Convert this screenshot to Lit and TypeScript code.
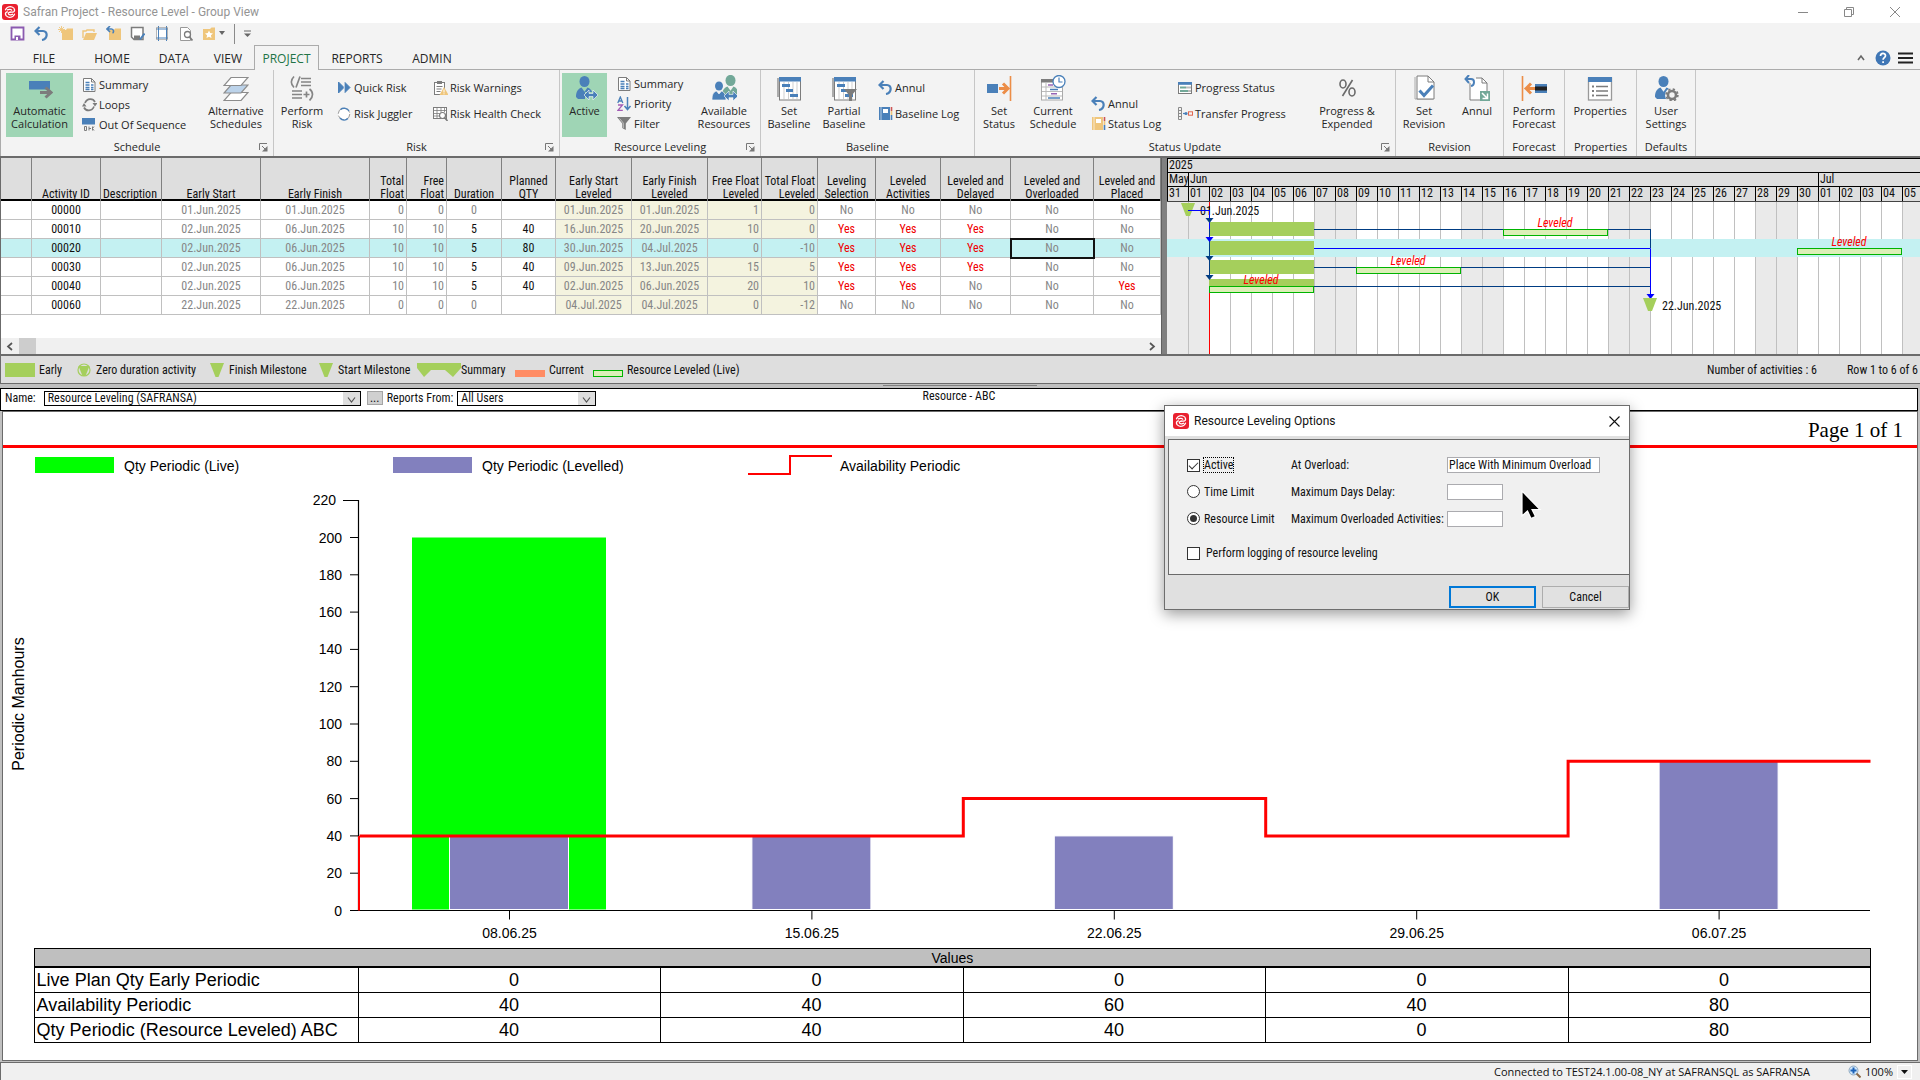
import { LitElement, html, svg, css, nothing, type TemplateResult, type SVGTemplateResult } from "lit";
import { customElement } from "lit/decorators.js";
import { classMap } from "lit/directives/class-map.js";

const BLUE = "#4a80b9";
const GRAY = "#7c7c7c";
const ORANGE = "#ec8d47";
const TEAL = "#72a898";
const SAND = "#efc67c";
const LIME = "#a5cf5c";

/* ---------- icon set ---------- */

const person = (x: number, y: number, fill: string) => svg`
  <g transform="translate(${x} ${y})" fill=${fill}>
    <ellipse cx="8.5" cy="5.5" rx="5" ry="5.6"/>
    <path d="M0 21c0-5 2-8 5.500-9.400l3 4.200 3-4.200C15 13 17 16 17 21l-2 2H2z"/>
  </g>`;
const bothArrow = (x: number, y: number) => svg`
  <path transform="translate(${x} ${y})" d="M0 5l5-5v3.400h4V0l5 5-5 5V6.600H5V10z" fill=${BLUE} stroke="#fff" stroke-width=".6"/>`;
const gantt = svg`
  <path d="M2 3v19" stroke=${GRAY} stroke-width="1.2"/>
  <rect x="3.5" y="3" width="21" height="22" fill="#fff" stroke=${GRAY}/>
  <rect x="3" y="2" width="22" height="4.5" fill=${BLUE}/>
  <path d="M8 7v17M12.500 7v17M17 7v17M21 7v17" stroke="#bbb" stroke-width=".7"/>
  <path d="M6 10.500h8M10 15.500h7M14 20.500h8" stroke=${BLUE} stroke-width="3"/>`;
const undo = svg`<path d="M5.500 1L1.500 5l4 4M2 5h7c5 0 5 8-1 9" fill="none" stroke=${BLUE} stroke-width="2.2"/>`;
const book = (c: string) => svg`
  <rect x="1" y="1" width="11" height="13" fill=${c}/><path d="M3 1v13" stroke="#fff" stroke-width=".6"/>
  <rect x="5" y="3" width="5" height="4" fill="#fff"/>
  <path d="M13.500 1v4" stroke="#c55" stroke-width="1.6"/><path d="M13.500 5v4" stroke=${SAND} stroke-width="1.6"/><path d="M13.500 9v5" stroke=${BLUE} stroke-width="1.6"/>`;

const ICONS: Record<string, SVGTemplateResult> = {
  auto: svg`<rect x="2" y="6" width="21" height="8.5" fill=${BLUE}/>
    <path d="M13 17.500h10M18.500 12.500l5.500 5-5.500 5" fill="none" stroke=${GRAY} stroke-width="3"/>`,
  layers: svg`<g stroke="#8c8c8c" stroke-width="1.2">
    <path d="M8 17.500h17l-7 8H1z" fill="#fff"/><path d="M8 10h17l-7 8H1z" fill="#bcd3ea"/><path d="M8 2.500h17l-7 8H1z" fill="#fff"/></g>`,
  formula: svg`<g fill="none" stroke="#858585" stroke-width="1.7">
    <path d="M5 1.500C1.500 5 1.500 9 5 12.500M11 1.500L7 12.500M12 3.500h10M12 7h10M12 10.500h10M3 16h10M3 19.500h10M3 23h10M14.500 19.500h6M17.500 16.500v6M20.500 14c4 3 4 8 0 11.500"/></g>`,
  level: svg`${person(4, 1, BLUE)}<path d="M13 17h12v8H13z" fill="#9fd5b5"/>${bothArrow(12, 15)}`,
  people: svg`${person(11, 0, TEAL)}<ellipse cx="8" cy="11" rx="4" ry="4.6" fill=${BLUE}/><path d="M1 25c0-5 1-8 4.500-9l2.500 3 2.500-3c3 1 4.500 4 4.500 9z" fill=${BLUE} stroke="#f3f3f3" stroke-width=".7"/>${bothArrow(13, 16)}`,
  gantt,
  ganttFilter: svg`${gantt}<path d="M13 14h13l-5 6v6h-3v-6z" fill=${GRAY}/>`,
  setStatus: svg`<rect x="1" y="9" width="11" height="9" fill=${BLUE}/><path d="M13 13.500h8M17 8.500l5 5-5 5" fill="none" stroke=${ORANGE} stroke-width="3"/><path d="M24.500 1v25" stroke=${ORANGE} stroke-width="1.6"/>`,
  schedule: svg`<rect x="1.5" y="5" width="21" height="20" fill="#fff" stroke="#aaa"/><rect x="1" y="4" width="12" height="3.5" fill=${GRAY}/>
    <path d="M2 12h20M2 16.500h20M2 21h20M6 8v17" stroke="#bbb"/><path d="M8 10h5M11 18.800h6" stroke="#9663b4" stroke-width="1.6"/><path d="M10 14.500h8M8 23h12" stroke=${BLUE} stroke-width="1.6"/>
    <circle cx="19" cy="6.5" r="6" fill="#fff" stroke=${BLUE} stroke-width="1.3"/><path d="M19 2.500v4.500h3.500" fill="none" stroke=${BLUE} stroke-width="1.2"/>`,
  percent: svg`<g fill="none" stroke="#6a6a6a" stroke-width="1.6"><ellipse cx="9" cy="9" rx="3" ry="4"/><ellipse cx="18" cy="17" rx="3" ry="4"/><path d="M18.500 5L8.500 21"/></g>`,
  docCheck: svg`<path d="M4 2v22h18" fill="none" stroke="#aaa"/><path d="M6 1h11l6 6v17H6z" fill="#fff" stroke=${GRAY}/><path d="M17 1v6h6" fill="none" stroke=${GRAY}/><path d="M8.500 15.500l4.500 5 9-10" fill="none" stroke=${BLUE} stroke-width="3"/>`,
  docUndo: svg`<path d="M6 8v17h17V8l-5-5h-6" fill="#fff" stroke=${GRAY}/><path d="M18 3v5h5" fill="none" stroke=${GRAY}/><path d="M5 0L1.500 4 5 8M2 4h5c4 0 4 6 0 7" fill="none" stroke=${BLUE} stroke-width="2"/><rect x="16" y="16" width="10" height="10" fill=${TEAL}/><path d="M18 18l5 5M23.500 18.500v5h-5" fill="none" stroke="#fff" stroke-width="1.5"/>`,
  forecast: svg`<path d="M1.500 1v25" stroke=${ORANGE} stroke-width="1.6"/><path d="M5 13.500h9M10 8.500l-5 5 5 5" fill="none" stroke=${ORANGE} stroke-width="3"/><rect x="14" y="9" width="12" height="9" fill=${BLUE}/><path d="M14 13.500h12" stroke="#222" stroke-width="4"/>`,
  props: svg`<rect x="1.5" y="3" width="23" height="22" fill="#fff" stroke="#999" stroke-width="1.3"/><rect x="1" y="2" width="24" height="5" fill=${BLUE}/><path d="M9 11.500h12M9 16h12M9 20.500h12" stroke=${GRAY} stroke-width="1.3"/><path d="M5 11.500h2M5 16h2M5 20.500h2" stroke=${GRAY} stroke-width="2"/>`,
  userGear: svg`${person(2, 1, BLUE)}<circle cx="19" cy="20" r="7" fill="#f3f3f3"/><circle cx="19" cy="20" r="4" fill="none" stroke=${GRAY} stroke-width="2.6"/><circle cx="19" cy="20" r="5.8" fill="none" stroke=${GRAY} stroke-width="1.8" stroke-dasharray="2.28 2.28"/>`,
  doc: svg`<path d="M1.500 1.500h8l3.500 3.500v9.500h-11.500z" fill="#fff" stroke=${GRAY}/><path d="M9.500 1.500v3.500h3.500" fill="none" stroke=${GRAY}/>
    <path d="M3.500 5.500h4M3.500 8h4M3.500 10.500h4M3.500 12.500h4M9 8h2.500M9 10.500h2.500M9 12.500h2.500" stroke=${BLUE} stroke-width="1.3"/>`,
  loops: svg`<g fill="none" stroke=${GRAY} stroke-width="1.7"><path d="M3 6c2-5 8-5 10-1M12 9.500c-2 5-8 5-10 1"/></g><path d="M10.500 6h5l-2.500 3.500zM0 9.500h4.500L2 6z" fill=${GRAY}/>`,
  sequence: svg`<rect x="0" y="1" width="13" height="6.5" fill=${BLUE}/><path d="M2.500 9.500v4h2v-4zM7 9.500v4M7 11.500h2M10.500 9.500v4M12 9.500l-1.500 2 1.500 2" fill="none" stroke=${GRAY}/>`,
  quick: svg`<path d="M1.500 2l5.500 5.500L1.500 13zM7.500 2L13 7.500 7.500 13z" fill=${BLUE} stroke=${BLUE}/><path d="M7.300 2v11" stroke="#f3f3f3" stroke-width=".8"/>`,
  juggler: svg`<circle cx="7" cy="8" r="5.8" fill="#fff" stroke="#9a9a9a" stroke-dasharray="7 2"/><path d="M3.500 3.500c3-2.500 7-1 8.500 1.500M3 12c2.500 3 6 2.500 8 .5" fill="none" stroke=${BLUE} stroke-width="1.4"/>`,
  warn: svg`<rect x="1.5" y="2.5" width="10" height="12" fill="#fff" stroke=${GRAY}/><rect x="4" y="1" width="5" height="3" fill=${GRAY}/><path d="M3.500 6.500h6M3.500 9h5M3.500 11.500h4" stroke=${GRAY}/><path d="M11 7l4.500 8h-9z" fill=${SAND}/><path d="M11 9.500v3M11 13.300v1" stroke="#fff"/>`,
  health: svg`<rect x=".5" y="1.5" width="13" height="11" fill="#fff" stroke=${GRAY}/><path d="M0 4.500h14M0 7.500h8M0 10h7M4 2v11M8 2v5M11.500 2v4" stroke=${GRAY} stroke-width=".8"/><circle cx="9.5" cy="9.5" r="3" fill="#fff" stroke=${GRAY} stroke-width="1.2"/><path d="M11.500 11.500l3 3.500" stroke=${GRAY} stroke-width="1.6"/>`,
  priority: svg`<path d="M.8 7L3.300 1l2.500 6M1.600 5h3.400" fill="none" stroke=${BLUE} stroke-width="1.3"/><path d="M1 9h4.500L1 14.300h4.800" fill="none" stroke="#a35cb5" stroke-width="1.3"/><path d="M10.500 1v12M7.500 10l3 3.500 3-3.500" fill="none" stroke=${BLUE} stroke-width="1.5"/>`,
  filter: svg`<path d="M0 1h14L8.800 7.500V14l-3.600-2V7.500z" fill=${GRAY}/><path d="M2.500 2.500l3.800 4.500v5" fill="none" stroke="#ddd" stroke-width=".7"/>`,
  undo,
  bookBlue: book(BLUE),
  bookSand: book(SAND),
  progress: svg`<rect x=".5" y="2.5" width="13" height="11" fill="#fff" stroke=${GRAY}/><rect x="0" y="2" width="14" height="2.8" fill=${BLUE}/><path d="M2 7.500h6M2 11h8" stroke=${TEAL} stroke-width="2"/><path d="M8 7.500h5M10 11h3" stroke="#bbb" stroke-width="2"/>`,
  transfer: svg`<path d="M.5 1.500h3v12h-3zM.5 4.500h3M.5 7.500h3M.5 10.500h3" fill="none" stroke="#8a8a8a"/><path d="M5 7.500h3" stroke=${BLUE} stroke-width="1.2"/><circle cx="8" cy="7.5" r="1.6" fill=${BLUE}/><rect x="10.5" y="5.8" width="4" height="3.4" fill="none" stroke="#e0664f"/>`,
  save: svg`<path d="M1.500 1.500h12v12h-12z" fill="#fff" stroke="#8b5bb0" stroke-width="1.8"/><path d="M4.500 9.500h6v4.500h-6z" fill="#8b5bb0"/><path d="M6 11h2v3h-2z" fill="#fff"/>`,
  folderNew: svg`<path d="M4 14V4h4l1-1.500h6V14z" fill=${SAND}/><path d="M3.500 0v7M0 3.500h7M1 1l5 5M6 1L1 6" stroke=${SAND} stroke-width=".9"/>`,
  folderOpen: svg`<path d="M1 14L4 7h11l-3 7z" fill=${SAND}/><path d="M1 12V5h3l1-1h7v2" fill="none" stroke=${SAND} stroke-width="1.4"/>`,
  folderBack: svg`<path d="M3 14V4h5l1-1.500h6V14z" fill=${SAND}/><path d="M4 0L1 3l3 3M1.500 3h4c2.500 0 2.500 3.500 1 4" fill="none" stroke=${BLUE} stroke-width="1.6"/>`,
  saveAs: svg`<path d="M1.500 1.500h11.500v12h-9l-2.500-2.500z" fill="#fff" stroke=${GRAY} stroke-width="1.5"/><path d="M4 9.500h6v4h-6z" fill=${GRAY}/><path d="M14.500 7.500L10 13.500" stroke=${BLUE} stroke-width="2"/>`,
  grid: svg`<rect x="3" y="1" width="10" height="13" fill="#fff"/><path d="M4.500 0v15M12.500 0v15M2 3h12M2 12h12" stroke=${BLUE}/><path d="M2.500 1.500h11v12h-11z" fill="none" stroke="#8d8d8d" stroke-width=".6"/>`,
  preview: svg`<path d="M2.500 1.500h7l3 3v10h-10z" fill="#fff" stroke="#999"/><circle cx="9.5" cy="8.5" r="3" fill="#fff" stroke=${GRAY} stroke-width="1.3"/><path d="M11.500 11l3 3.500" stroke=${GRAY} stroke-width="1.8"/>`,
  star: svg`<path d="M1 14V3h7l1.500-1.500H13V14z" fill=${SAND}/><path d="M7 4.500l1.200 2.600 2.800.3-2.100 1.900.6 2.800L7 10.700l-2.500 1.400.6-2.800L3 7.400l2.800-.3z" fill="#fff"/>`,
};

const bigIcon = (n: string) => html`<svg width="26" height="26" viewBox="0 0 26 26" aria-hidden="true">${ICONS[n]}</svg>`;
const smallIcon = (n: string) => html`<svg width="15" height="15" viewBox="0 0 15 15" aria-hidden="true">${ICONS[n]}</svg>`;
const logo = html`<svg width="16" height="16" viewBox="0 0 16 16" aria-hidden="true">
  <rect width="16" height="16" rx="3" fill="#e9202f"/>
  <g fill="none" stroke="#fff" stroke-width="1.3" stroke-linecap="round">
    <path d="M3.500 5.800C4.500 3.200 7.500 2.200 10 3c3.200 1 3.400 4.800.6 5.200H8.200"/>
    <path d="M12.500 10.200c-1 2.600-4 3.600-6.500 2.800-3.200-1-3.400-4.800-.6-5.200"/>
    <path d="M5.400 5.900c1.800-1 4-.6 4.300.3M10.600 10.300c-1.300 1-3.800.7-4.200-.4-.2-1 .6-1.700 1.800-1.700"/>
  </g></svg>`;

/* ---------- ribbon ---------- */

type Big = { kind: "big"; icon: string; lines: string[]; width: number; on?: boolean };
type Col = { kind: "col"; pad: number; top: number; row: number; width?: number; items: [string, string][] };
type Group = { name: string; width: number; pad?: number; launcher?: boolean; parts: (Big | Col)[] };
const big = (icon: string, text: string, width: number, on = false): Big => ({ kind: "big", icon, lines: text.split("|"), width, on });
const col = (pad: number, top: number, row: number, width: number | undefined, ...items: [string, string][]): Col => ({ kind: "col", pad, top, row, width, items });

const GROUPS: Group[] = [
  { name: "Schedule", width: 273, pad: 5, launcher: true, parts: [
    big("auto", "Automatic|Calculation", 67, true),
    col(9, 1, 20, 135, ["doc", "Summary"], ["loops", "Loops"], ["sequence", "Out Of Sequence"]),
    big("layers", "Alternative|Schedules", 56)] },
  { name: "Risk", width: 286, launcher: true, parts: [
    big("formula", "Perform|Risk", 56),
    col(7, 1, 26, 95, ["quick", "Quick Risk"], ["juggler", "Risk Juggler"]),
    col(8, 1, 26, undefined, ["warn", "Risk Warnings"], ["health", "Risk Health Check"])] },
  { name: "Resource Leveling", width: 201, pad: 2, launcher: true, parts: [
    big("level", "Active", 45, true),
    col(10, 0, 20, 83, ["doc", "Summary"], ["priority", "Priority"], ["filter", "Filter"]),
    big("people", "Available|Resources", 68)] },
  { name: "Baseline", width: 214, parts: [
    big("gantt", "Set|Baseline", 56), big("ganttFilter", "Partial|Baseline", 54),
    col(7, 1, 26, undefined, ["undo", "Annul"], ["bookBlue", "Baseline Log"])] },
  { name: "Status Update", width: 421, launcher: true, parts: [
    big("setStatus", "Set|Status", 48), big("schedule", "Current|Schedule", 60),
    col(8, 20, 20, 87, ["undo", "Annul"], ["bookSand", "Status Log"]),
    col(8, 1, 26, 140, ["progress", "Progress Status"], ["transfer", "Transfer Progress"]),
    big("percent", "Progress &|Expended", 74)] },
  { name: "Revision", width: 108, parts: [big("docCheck", "Set|Revision", 56), big("docUndo", "Annul", 50)] },
  { name: "Forecast", width: 61, parts: [big("forecast", "Perform|Forecast", 60)] },
  { name: "Properties", width: 72, parts: [big("props", "Properties", 70)] },
  { name: "Defaults", width: 59, parts: [big("userGear", "User|Settings", 58)] },
];

const TABS: [string, number][] = [["FILE", 68], ["HOME", 68], ["DATA", 56], ["VIEW", 52], ["PROJECT", 65], ["REPORTS", 76], ["ADMIN", 74]];
const QUICK = ["save", "undo", "folderNew", "folderOpen", "folderBack", "saveAs", "grid", "preview", "star"];

@customElement("app-ribbon")
class AppRibbon extends LitElement {
  static styles = css`
    :host { display: block; background: #f3f3f3; color: #262626; font: 11px/13px "Open Sans", "Noto Sans", sans-serif; }
    button { font: inherit; color: inherit; background: none; border: 0; padding: 0; margin: 0; }
    svg { display: block; flex: none; }
    .title { display: flex; align-items: center; height: 23px; background: #fff; padding: 0 2px; }
    .title h1 { flex: 1; margin: 0 0 0 5px; font: 12px/16px Roboto, sans-serif; color: #949494; }
    .title button { width: 46px; display: flex; justify-content: center; }
    .quick { display: flex; align-items: center; height: 21px; padding: 0 0 1px 10px; gap: 9px; }
    .quick .bar { width: 1px; height: 20px; background: #8a8a8a; }
    .quick .drop { margin-left: -7px; }
    .tabs { display: flex; height: 25px; padding-left: 10px; box-shadow: inset 0 -1px #ababab; }
    .tab { box-sizing: border-box; padding-top: 2px; font-size: 12px; }
    .tab.current { border: 1px solid #ababab; border-bottom: 0; padding-top: 1px; background: #f3f3f3; color: #217346; }
    .help { margin-left: auto; display: flex; align-items: center; gap: 7px; padding-right: 7px; }
    .help button:first-child { margin-right: 3px; }
    .groups { display: flex; border-left: 1px solid #ababab; height: 86px; }
    .group { box-sizing: border-box; display: flex; flex-direction: column; flex: none; padding-top: 3px; border-right: 1px solid #c6c6c6; }
    .body { display: flex; height: 64px; }
    .big { display: flex; flex-direction: column; align-items: center; flex: none; padding-top: 2px; }
    .big svg { margin-bottom: 3px; }
    .on { background: #9fd5b5; }
    .col { box-sizing: border-box; flex: none; }
    .small { display: flex; align-items: center; gap: 2px; white-space: nowrap; }
    .name { display: flex; align-items: center; justify-content: center; height: 19px; }
    .name.launch { display: grid; grid-template-columns: 14px 1fr 14px; justify-items: center; padding: 0 3px; }
    .name.launch span { grid-column: 2; }
  `;
  private part(p: Big | Col) {
    if (p.kind === "big")
      return html`<button class=${classMap({ big: true, on: !!p.on })} style="width:${p.width}px">
        ${bigIcon(p.icon)}${p.lines.map((l) => html`<span>${l}</span>`)}</button>`;
    return html`<div class="col" style="padding:${p.top}px 0 0 ${p.pad}px;${p.width ? `width:${p.width}px` : ""}">
      ${p.items.map(([i, t]) => html`<button class="small" style="height:${p.row}px">${smallIcon(i)}<span>${t}</span></button>`)}</div>`;
  }
  render() {
    return html`
      <header class="title">${logo}<h1>Safran Project - Resource Level - Group View</h1>
        <button aria-label="Minimize"><svg width="12" height="12"><path d="M1 6.500h10" stroke="#888"/></svg></button>
        <button aria-label="Restore"><svg width="12" height="12"><path d="M1.500 3.500h7v7h-7zM3.500 3.500v-2h7v7h-2" fill="none" stroke="#888"/></svg></button>
        <button aria-label="Close"><svg width="12" height="12"><path d="M1 1l10 10M11 1L1 11" stroke="#888"/></svg></button>
      </header>
      <div class="quick">
        ${QUICK.map((q) => html`<button aria-label=${q}>${smallIcon(q)}</button>`)}
        <svg class="drop" width="6" height="5"><path d="M0 0h6L3 4z" fill="#666"/></svg>
        <span class="bar"></span>
        <svg width="7" height="8"><path d="M0 1h7" stroke="#666"/><path d="M0 3.500h7L3.500 7z" fill="#666"/></svg>
      </div>
      <nav class="tabs">
        ${TABS.map(([t, w]) => html`<button class=${classMap({ tab: true, current: t === "PROJECT" })} style="width:${w}px">${t}</button>`)}
        <div class="help">
          <button aria-label="Collapse ribbon"><svg width="8" height="8"><path d="M1 6l3-4 3 4" fill="none" stroke="#666" stroke-width="1.6"/></svg></button>
          <button aria-label="Help"><svg width="16" height="16"><circle cx="8" cy="8" r="7.5" fill="#3f76b5"/><path d="M5.500 6c0-3.500 5-3.300 5-.3 0 1.800-2.400 2-2.400 4M8.100 11.300v1.700" fill="none" stroke="#fff" stroke-width="1.7"/></svg></button>
          <button aria-label="Menu"><svg width="15" height="12"><path d="M0 1.500h15M0 6h15M0 10.500h15" stroke="#222" stroke-width="1.8"/></svg></button>
        </div>
      </nav>
      <div class="groups">
        ${GROUPS.map((g) => html`<section class="group" style="width:${g.width}px">
          <div class="body" style="padding-left:${g.pad ?? 0}px">${g.parts.map((p) => this.part(p))}</div>
          <div class=${classMap({ name: true, launch: !!g.launcher })}><span>${g.name}</span>${g.launcher ? html`<button aria-label="${g.name} options">
            <svg width="10" height="10"><path d="M1.500 8V1.500H9" fill="none" stroke="#777"/><path d="M4 4l4 4" stroke="#777"/><path d="M9.500 4v5.500H4z" fill="#777"/></svg></button>` : nothing}</div>
        </section>`)}
      </div>`;
  }
}

/* ---------- activity table ---------- */

type Column = { head: string; width: number; align?: "right" | "left"; level?: boolean };
const COLUMNS: Column[] = [
  { head: "", width: 31 }, { head: "Activity ID", width: 69 }, { head: "Description", width: 61, align: "left" },
  { head: "Early Start", width: 99 }, { head: "Early Finish", width: 109 },
  { head: "Total|Float", width: 37, align: "right" }, { head: "Free|Float", width: 40, align: "right" },
  { head: "Duration", width: 55 }, { head: "Planned|QTY", width: 54 },
  { head: "Early Start|Leveled", width: 76, level: true }, { head: "Early Finish|Leveled", width: 76, level: true },
  { head: "Free Float|Leveled", width: 54, align: "right", level: true }, { head: "Total Float|Leveled", width: 56, align: "right", level: true },
  { head: "Leveling|Selection", width: 58 }, { head: "Leveled|Activities", width: 65 }, { head: "Leveled and|Delayed", width: 70 },
  { head: "Leveled and|Overloaded", width: 83 }, { head: "Leveled and|Placed", width: 67 },
];
const ROWS: string[][] = [
  ["", "00000", "", "01.Jun.2025", "01.Jun.2025", "0", "0", "0", "", "01.Jun.2025", "01.Jun.2025", "1", "0", "No", "No", "No", "No", "No"],
  ["", "00010", "", "02.Jun.2025", "06.Jun.2025", "10", "10", "5", "40", "16.Jun.2025", "20.Jun.2025", "10", "0", "Yes", "Yes", "Yes", "No", "No"],
  ["", "00020", "", "02.Jun.2025", "06.Jun.2025", "10", "10", "5", "80", "30.Jun.2025", "04.Jul.2025", "0", "-10", "Yes", "Yes", "Yes", "No", "No"],
  ["", "00030", "", "02.Jun.2025", "06.Jun.2025", "10", "10", "5", "40", "09.Jun.2025", "13.Jun.2025", "15", "5", "Yes", "Yes", "Yes", "No", "No"],
  ["", "00040", "", "02.Jun.2025", "06.Jun.2025", "10", "10", "5", "40", "02.Jun.2025", "06.Jun.2025", "20", "10", "Yes", "Yes", "No", "No", "Yes"],
  ["", "00060", "", "22.Jun.2025", "22.Jun.2025", "0", "0", "0", "", "04.Jul.2025", "04.Jul.2025", "0", "-12", "No", "No", "No", "No", "No"],
];
const SELECTED = 2;

@customElement("activity-table")
class ActivityTable extends LitElement {
  static styles = css`
    :host { display: flex; flex-direction: column; min-width: 0; background: #fff; font: 12px/13px "Roboto Condensed", Roboto, sans-serif; color: #111; }
    table { table-layout: fixed; width: 100%; border-spacing: 0; }
    th, td { box-sizing: border-box; padding: 0 2px; text-align: center; font-weight: 400; white-space: nowrap; overflow: hidden; }
    th { height: 43px; background: #dedede; border-right: 1px solid #808080; box-shadow: inset 0 -2px #000; vertical-align: bottom; }
    td { height: 19px; border-right: 1px solid #c0c0c0; border-bottom: 1px solid #c0c0c0; color: #868686; }
    td.level { background: #f4f3df; }
    td.strong { color: #111; }
    td.yes { color: #f00000; }
    .selected td { background: #c4f1f2; }
    .right { text-align: right; }
    .left { text-align: left; }
    td.focus { outline: 2px solid #111; outline-offset: -1px; }
    .scroll { display: flex; align-items: center; margin-top: auto; height: 16px; background: #f0f0f0; padding: 0 5px; }
    .scroll button { border: 0; background: none; padding: 0; display: flex; }
    .thumb { width: 17px; height: 16px; background: #cdcdcd; margin: 0 auto 0 6px; }
  `;
  render() {
    return html`<table>
      <colgroup>${COLUMNS.map((c) => html`<col style="width:${c.width}px">`)}</colgroup>
      <thead><tr>${COLUMNS.map((c) => html`<th scope="col" class=${c.align ?? ""}>${c.head.split("|").map((l, i) => html`${i ? html`<br>` : nothing}${l}`)}</th>`)}</tr></thead>
      <tbody>${ROWS.map((r, ri) => html`<tr class=${ri === SELECTED ? "selected" : ""}>${r.map((v, ci) => html`<td class=${classMap({
        right: COLUMNS[ci].align === "right", level: !!COLUMNS[ci].level,
        strong: ci === 1 || ci === 8 || (ci === 7 && v !== "0"), yes: v === "Yes",
        focus: ri === SELECTED && ci === 16 })}>${v}</td>`)}</tr>`)}</tbody>
    </table>
    <div class="scroll">
      <button aria-label="Scroll left"><svg width="7" height="9"><path d="M6 1L2 4.500 6 8" fill="none" stroke="#555" stroke-width="1.7"/></svg></button>
      <span class="thumb"></span>
      <button aria-label="Scroll right"><svg width="7" height="9"><path d="M1 1l4 3.500L1 8" fill="none" stroke="#555" stroke-width="1.7"/></svg></button>
    </div>`;
  }
}

/* ---------- gantt ---------- */

const DAY = 21;
const DAYS = Array.from({ length: 36 }, (_, i) => new Date(Date.UTC(2025, 4, 31 + i)).getUTCDate());
const dx = (n: number) => n * DAY;
const ry = (row: number) => 8 + 19 * row;
const arrow = (x: number, y: number, c = "#00f") => svg`<path d="M${x - 4} ${y - 3}h8l-4 5z" fill=${c}/>`;
const milestone = (x: number, y: number) => svg`<path d="M${x - 7} ${y}h14l-5 13h-4z" fill=${LIME}/>`;
const leveled = (start: number, row: number) => svg`
  <rect x=${dx(start) + 0.5} y=${ry(row) + 0.5} width="104" height="6" fill="#dcefb8" stroke="#00b400"/>
  <text class="lev" x=${dx(start) + 52} y=${ry(row) - 2} text-anchor="middle">Leveled</text>`;

@customElement("gantt-view")
class GanttView extends LitElement {
  static styles = css`
    :host { display: flex; flex-direction: column; min-width: 0; overflow: hidden; font: 12px/13px "Roboto Condensed", Roboto, sans-serif; color: #111; background: #fff; }
    .band { display: flex; height: 14px; box-sizing: border-box; border-top: 1px solid #000; background: #dedede; }
    .days { height: 16px; border-bottom: 1px solid #444; }
    .band span { box-sizing: border-box; flex: none; border-left: 1px solid #000; padding-left: 1px; white-space: nowrap; }
    .band .rest { flex: 1; }
    svg { display: block; flex: 1; width: 100%; }
    text { fill: #111; }
    .lev { fill: #f00; font-style: italic; }
  `;
  render() {
    const navy = "#003c82";
    return html`
      <div class="band"><span class="rest">2025</span></div>
      <div class="band"><span style="width:${DAY}px">May</span><span style="width:${30 * DAY}px">Jun</span><span class="rest">Jul</span></div>
      <div class="band days">${DAYS.map((d) => html`<span style="width:${DAY}px">${String(d).padStart(2, "0")}</span>`)}</div>
      <svg height="152" role="img" aria-label="Activity bars">
        ${DAYS.map((_, i) => (i % 7 < 2 ? svg`<rect x=${dx(i)} width=${DAY} height="100%" fill="#eaeaea"/>` : nothing))}
        ${DAYS.map((_, i) => (i ? svg`<path d="M${dx(i) + 0.5} 0v400" stroke="#c0c0c0"/>` : nothing))}
        <rect y=${ry(2) - 9} width="100%" height="18" fill="#c4f1f2"/>
        <path d="M${dx(2) + 0.5} 0v400" stroke="#f00"/>
        ${milestone(dx(1), 1)}
        <text x=${dx(1) + 12} y="13">01.Jun.2025</text>
        ${[1, 2, 3].map((r) => svg`<rect x=${dx(2)} y=${ry(r) - 7} width=${dx(5)} height="14" fill=${LIME}/>`)}
        <rect x=${dx(2)} y=${ry(4) - 7} width=${dx(5)} height="7" fill=${LIME}/>
        <g fill="none">
          <path d="M${dx(1)} 8.500h${DAY}" stroke="#00f"/>
          <path d="M${dx(2) + 0.5} 8v19" stroke="#00f"/><path d="M${dx(2) + 0.5} 27v50" stroke=${navy}/>
          <path d="M${dx(7)} ${ry(1) + 0.5}H${dx(23)}M${dx(7)} ${ry(3) + 0.5}H${dx(23)}M${dx(7)} ${ry(4) + 0.5}H${dx(23)}" stroke=${navy}/>
          <path d="M${dx(23) + 0.5} ${ry(1)}V${ry(2)}" stroke=${navy}/>
          <path d="M${dx(7)} ${ry(2) + 0.5}H${dx(23) + 0.5}V94" stroke="#00f"/>
        </g>
        ${arrow(dx(2) + 0.5, 19, navy)}${arrow(dx(2) + 0.5, 38)}${arrow(dx(2) + 0.5, 57, navy)}${arrow(dx(2) + 0.5, 76, navy)}
        ${leveled(16, 1)}${leveled(30, 2)}${leveled(9, 3)}${leveled(2, 4)}
        ${arrow(dx(23) + 0.5, 95)}
        ${milestone(dx(23), 96)}
        <text x=${dx(23) + 12} y="108">22.Jun.2025</text>
      </svg>`;
  }
}

/* ---------- resource report ---------- */

const PERIODS = ["08.06.25", "15.06.25", "22.06.25", "29.06.25", "06.07.25"];
const LEVELLED = [40, 40, 40, 0, 80];
const AVAILABLE = [40, 40, 60, 40, 80];
const VALUES: [string, number[]][] = [
  ["Live Plan Qty Early Periodic", [0, 0, 0, 0, 0]],
  ["Availability Periodic", AVAILABLE],
  ["Qty Periodic (Resource Leveled) ABC", LEVELLED],
];
const X0 = 355.5, PERIOD = 302.4, Y0 = 462.5, UNIT = 1.865;
const qy = (v: number) => Y0 - v * UNIT;
const px = (i: number) => X0 + i * PERIOD;

@customElement("resource-report")
class ResourceReport extends LitElement {
  static styles = css`
    :host { display: block; background: #fff; color: #000; font: 14px/18px "Liberation Sans", Arial, sans-serif; }
    .page { margin: 0; padding: 6px 14px 3px; text-align: right; font: 21px/24px "Liberation Serif", "Times New Roman", serif; border-bottom: 3px solid #f00; }
    svg { display: block; width: 100%; height: auto; }
    .vertical { font-size: 16px; }
    table { width: 96%; margin-left: 1.6%; border-collapse: collapse; table-layout: fixed; }
    caption { box-sizing: border-box; height: 18px; line-height: 18px; border: 1px solid #000; border-bottom: 0; background: #bfbfbf; }
    th, td { box-sizing: border-box; height: 25px; padding: 0; border: 1px solid #000; font-size: 18px; line-height: 24px; }
    tr:first-child > * { border-top-width: 2px; }
    th { width: 324px; text-align: left; font-weight: 400; padding-left: 2px; }
    td { text-align: right; padding-right: 141px; }
  `;
  render() {
    let line = `M${px(0) + 1} ${qy(AVAILABLE[0])}`;
    AVAILABLE.forEach((v, i) => (line += `V${qy(v)}H${px(i + 1)}`));
    return html`
      <p class="page">Page 1 of 1</p>
      <svg viewBox="0 0 1914 500" role="img" aria-label="Periodic manhours chart">
        <rect x="32" y="9" width="79" height="16" fill="#0f0"/><text x="121" y="23">Qty Periodic (Live)</text>
        <rect x="390" y="9" width="79" height="16" fill="#8280be"/><text x="479" y="23">Qty Periodic (Levelled)</text>
        <path d="M745 26h42V8h42" fill="none" stroke="#f00" stroke-width="2"/><text x="837" y="23">Availability Periodic</text>
        <text class="vertical" transform="translate(21 256) rotate(-90)" text-anchor="middle">Periodic Manhours</text>
        <path d="M${X0} 52V${Y0}H1867M340 52.500h16" fill="none" stroke="#000" stroke-width="1.2"/>
        <text x="333" y="57" text-anchor="end">220</text>
        ${Array.from({ length: 11 }, (_, i) => i * 20).map((v) => svg`
          <path d="M347 ${qy(v)}h8" stroke="#000"/><text x="339" y=${qy(v) + 5} text-anchor="end">${v}</text>`)}
        ${PERIODS.map((p, i) => svg`<path d="M${px(i) + 151} ${Y0}v9" stroke="#000"/><text x=${px(i) + 151} y="490" text-anchor="middle">${p}</text>`)}
        <rect x="409" y=${qy(200)} width="194" height=${200 * UNIT - 1} fill="#0f0"/>
        ${LEVELLED.map((v, i) => (v ? svg`<rect x=${px(i) + 91} y=${qy(v)} width="119" height=${v * UNIT - 1} fill="#8280be" stroke="#fff"/>` : nothing))}
        <path d="M${X0 + 0.5} ${Y0}V${qy(40)}" stroke="#f00" stroke-width="2"/>
        <path d=${line} fill="none" stroke="#f00" stroke-width="3"/>
      </svg>
      <table>
        <caption>Values</caption>
        <tbody>${VALUES.map(([n, vs]) => html`<tr><th scope="row">${n}</th>${vs.map((v) => html`<td>${v}</td>`)}</tr>`)}</tbody>
      </table>`;
  }
}

/* ---------- options dialog ---------- */

@customElement("leveling-dialog")
class LevelingDialog extends LitElement {
  static styles = css`
    :host { display: block; box-sizing: border-box; border: 1px solid #6e6e6e; background: #e0e0e0; box-shadow: 0 4px 14px rgba(0, 0, 0, 0.4); color: #111; font: 12px/14px "Roboto Condensed", Roboto, sans-serif; }
    header { display: flex; align-items: center; gap: 5px; height: 30px; background: #fff; padding: 0 9px 0 8px; }
    h2 { flex: 1; margin: 0; font: 12px/16px Roboto, sans-serif; }
    button { font: inherit; color: inherit; }
    header button { border: 0; background: none; padding: 0; display: flex; }
    .panel { display: grid; grid-template: 26px 27px 27px 42px / 104px 156px 1fr; align-items: center; margin: 3px 0 0 3px; padding: 12px 0 0 18px; border: 1px solid #6a6a6a; border-right: 0; background: #f0f0f0; }
    label { display: flex; align-items: center; gap: 4px; white-space: nowrap; }
    .focus { outline: 1px dotted #000; }
    .wide { grid-column: 1 / -1; gap: 6px; }
    input[type="text"] { box-sizing: border-box; width: 56px; height: 16px; padding: 0 1px; border: 1px solid #ababaf; background: #fff; font: inherit; color: inherit; }
    input.long { width: 153px; }
    input[type="checkbox"], input[type="radio"] { appearance: none; box-sizing: border-box; width: 13px; height: 13px; margin: 0; border: 1px solid #333; background: #fff; display: grid; place-items: center; }
    input[type="radio"] { border-radius: 50%; }
    input[type="radio"]:checked::before { content: ""; width: 7px; height: 7px; border-radius: 50%; background: #333; }
    input[type="checkbox"]:checked::before { content: ""; width: 8px; height: 4px; border: solid #333; border-width: 0 0 1px 1px; transform: translateY(-1px) rotate(-45deg); }
    footer { display: flex; justify-content: flex-end; gap: 6px; padding: 11px 0 1px; }
    footer button { box-sizing: border-box; width: 87px; height: 22px; padding: 0; border: 1px solid #adadad; background: #e1e1e1; }
    footer .ok { border: 2px solid #0078d7; }
  `;
  render() {
    return html`
      <header>${logo}<h2>Resource Leveling Options</h2>
        <button aria-label="Close"><svg width="11" height="11"><path d="M.5.500l10 10M10.500.500l-10 10" stroke="#111" stroke-width="1.1"/></svg></button></header>
      <form class="panel" @submit=${(e: Event) => e.preventDefault()}>
        <label><input type="checkbox" checked><span class="focus">Active</span></label>
        <label for="overload">At Overload:</label><input id="overload" class="long" type="text" value="Place With Minimum Overload">
        <label><input type="radio" name="limit">Time Limit</label>
        <label for="delay">Maximum Days Delay:</label><input id="delay" type="text">
        <label><input type="radio" name="limit" checked>Resource Limit</label>
        <label for="count">Maximum Overloaded Activities:</label><input id="count" type="text">
        <label class="wide"><input type="checkbox">Perform logging of resource leveling</label>
      </form>
      <footer><button class="ok">OK</button><button>Cancel</button></footer>`;
  }
}

/* ---------- shell ---------- */

const LEGEND: [string, TemplateResult][] = [
  ["Early", html`<svg width="30" height="14"><rect width="30" height="14" fill=${LIME}/></svg>`],
  ["Zero duration activity", html`<svg width="15" height="14"><circle cx="7" cy="7" r="6" fill="none" stroke=${LIME} stroke-width="1.2"/><path d="M1.500 3h11L8.500 13h-3z" fill=${LIME}/></svg>`],
  ["Finish Milestone", html`<svg width="15" height="14"><path d="M0 0h14L8.500 14h-3z" fill=${LIME}/></svg>`],
  ["Start Milestone", html`<svg width="15" height="14"><path d="M0 0h14L8.500 14h-3z" fill=${LIME}/></svg>`],
  ["Summary", html`<svg width="44" height="14"><path d="M0 0h44v5l-8 9-8-7H14l-7 7-7-9z" fill=${LIME}/></svg>`],
  ["Current", html`<svg width="30" height="14"><rect y="7" width="30" height="7" fill="#ff8c64"/></svg>`],
  ["Resource Leveled (Live)", html`<svg width="30" height="14"><rect x=".5" y="7.5" width="29" height="6" fill="#dcefb8" stroke="#00b400"/></svg>`],
];
const chevron = html`<svg class="chev" width="17" height="13" aria-hidden="true"><rect width="17" height="13" fill="#dedede"/><path d="M5 5.500L8.500 10 12 5.500" fill="none" stroke="#555" stroke-width="1.2"/></svg>`;

@customElement("app-root")
class AppRoot extends LitElement {
  static styles = css`
    :host { display: flex; flex-direction: column; position: relative; min-height: 100vh; overflow: hidden; background: #c0c0c0; color: #111; font: 12px/14px "Roboto Condensed", Roboto, sans-serif; }
    .plan { display: grid; grid-template-columns: minmax(0, 1160fr) 6px minmax(0, 753fr); min-height: 200px; box-sizing: border-box; border: solid #6b6b6b; border-width: 2px 0 2px 1px; }
    .split { background: #808080; border-left: 1px solid #606060; box-sizing: border-box; }
    .legend { display: grid; grid-template-columns: 72px 133px 109px 98px 98px 78px 1fr auto auto; align-items: center; height: 26px; padding: 1px 2px 0 4px; background: #dedede; border: solid #6b6b6b; border-width: 0 0 1px 1px; }
    .legend span { display: flex; align-items: center; gap: 4px; white-space: nowrap; }
    .legend svg { flex: none; }
    .legend span:nth-child(5) { gap: 0; }
    .legend .count { margin-right: 30px; }
    .grip { height: 4px; display: flex; justify-content: center; }
    .grip::before { content: ""; width: 154px; height: 1px; margin-top: 1px; background: #808080; }
    .bar { display: grid; grid-template-columns: 1fr auto 1fr; height: 21px; margin-right: 2px; border: 1px solid #000; background: #fff; }
    .bar form { display: flex; align-items: center; height: 18px; padding-left: 4px; }
    .bar h2 { margin: 0; font: inherit; }
    .pick { position: relative; display: flex; }
    select { appearance: none; box-sizing: border-box; height: 15px; padding: 0 20px 0 3px; border: 1px solid #000; border-radius: 0; background: #fff; font: inherit; line-height: 13px; color: inherit; }
    .chev { position: absolute; right: 1px; top: 1px; pointer-events: none; }
    .name { width: 317px; margin-left: 8px; }
    .users { width: 139px; margin-left: 4px; }
    .pick select { width: 100%; }
    .more { width: 16px; height: 14px; margin: 0 4px 0 6px; padding: 0; border: 1px solid #a5a5a5; background: #d0d0d0; font: inherit; line-height: 8px; color: #111; }
    resource-report { flex: 1; margin: 0 2px; border: 1px solid #6b6b6b; }
    .status { display: flex; align-items: center; justify-content: flex-end; height: 17px; margin-top: 1px; border: solid #6b6b6b; border-width: 1px 0 0 1px; background: #f0f0f0; font: 11px/14px "Open Sans", sans-serif; }
    .status .zoom { display: flex; align-items: center; gap: 4px; margin: 0 8px 0 38px; }
    .status button { width: 15px; height: 14px; padding: 0; border: 1px solid #fff; background: #f0f0f0; display: flex; align-items: center; justify-content: center; }
    leveling-dialog { position: absolute; left: 1164px; top: 405px; width: 466px; }
    .cursor { position: absolute; left: 1521px; top: 490px; }
  `;
  render() {
    return html`
      <app-ribbon></app-ribbon>
      <main class="plan"><activity-table></activity-table><div class="split"></div><gantt-view></gantt-view></main>
      <div class="legend">
        ${LEGEND.map(([t, mark]) => html`<span>${mark}${t}</span>`)}
        <span class="count">Number of activities : 6</span><span>Row 1 to 6 of 6</span>
      </div>
      <div class="grip"></div>
      <div class="bar">
        <form>
          <label for="view">Name:</label>
          <span class="pick name"><select id="view"><option>Resource Leveling (SAFRANSA)</option></select>${chevron}</span>
          <button type="button" class="more">...</button>
          <label for="from">Reports From:</label>
          <span class="pick users"><select id="from"><option>All Users</option></select>${chevron}</span>
        </form>
        <h2>Resource - ABC</h2>
      </div>
      <resource-report></resource-report>
      <footer class="status">
        <span>Connected to TEST24.1.00-08_NY at SAFRANSQL as SAFRANSA</span>
        <span class="zoom">
          <svg width="13" height="13"><circle cx="5.5" cy="5.5" r="4.5" fill="#cfe6fa" stroke="#8fa9c0"/><path d="M5.500 2.500v6M2.500 5.500h6" stroke="#1c62b8" stroke-width="2"/><path d="M8.500 8.500l4 4" stroke="#8a6a4a" stroke-width="2"/></svg>
          <span>100%</span>
          <button aria-label="Zoom level"><svg width="7" height="4"><path d="M0 0h7L3.500 4z" fill="#111"/></svg></button>
        </span>
      </footer>
      <leveling-dialog></leveling-dialog>
      <svg class="cursor" width="22" height="30" viewBox="0 0 22 30" aria-hidden="true"><path d="M1 1v25l5.500-5 3.500 7.500 4.500-2-3.500-7h8z" fill="#000" stroke="#fff" stroke-width="1.2"/></svg>`;
  }
}
